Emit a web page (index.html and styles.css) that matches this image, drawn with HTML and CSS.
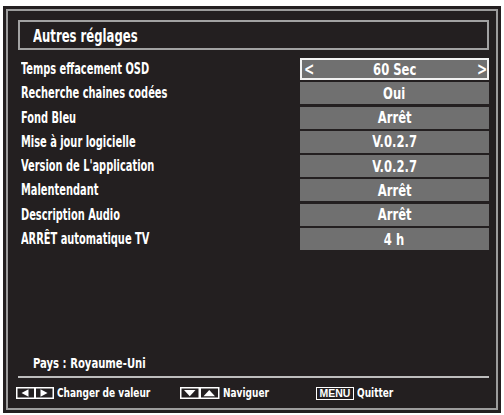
FILE: index.html
```html
<!DOCTYPE html>
<html lang="fr">
<head>
<meta charset="utf-8">
<title>Autres réglages</title>
<link rel="stylesheet" href="styles.css">
</head>
<body>
<div class="panel">
  <div class="frame">
    <div class="title-box"><span class="title">Autres réglages</span></div>
    <ul class="rows">
      <li class="row"><span class="label">Temps effacement OSD</span><span class="value selected"><span class="arrow">&lt;</span><span class="val">60 Sec</span><span class="arrow">&gt;</span></span></li>
      <li class="row"><span class="label">Recherche chaines codées</span><span class="value"><span class="val">Oui</span></span></li>
      <li class="row"><span class="label">Fond Bleu</span><span class="value"><span class="val">Arrêt</span></span></li>
      <li class="row"><span class="label">Mise à jour logicielle</span><span class="value"><span class="val">V.0.2.7</span></span></li>
      <li class="row"><span class="label">Version de L'application</span><span class="value"><span class="val">V.0.2.7</span></span></li>
      <li class="row"><span class="label">Malentendant</span><span class="value"><span class="val">Arrêt</span></span></li>
      <li class="row"><span class="label">Description Audio</span><span class="value"><span class="val">Arrêt</span></span></li>
      <li class="row"><span class="label">ARRÊT automatique TV</span><span class="value"><span class="val">4 h</span></span></li>
    </ul>
    <div class="spacer"></div>
    <div class="country"><span class="country-text">Pays : Royaume-Uni</span></div>
    <div class="separator"></div>
    <div class="footer">
      <div class="hint hint-lr">
        <svg class="key" width="38" height="12" viewBox="0 0 38 12">
          <rect x="0.75" y="0.75" width="18" height="10.5" fill="none" stroke="#fff" stroke-width="1.5"/>
          <rect x="19.25" y="0.75" width="18" height="10.5" fill="none" stroke="#fff" stroke-width="1.5"/>
          <polygon points="5.5,6 12.5,2.2 12.5,9.8" fill="#fff"/>
          <polygon points="31.5,6 24.5,2.2 24.5,9.8" fill="#fff"/>
        </svg>
        <span class="hint-text">Changer de valeur</span>
      </div>
      <div class="hint hint-ud">
        <svg class="key" width="40" height="12" viewBox="0 0 40 12">
          <rect x="0.75" y="0.75" width="18.5" height="10.5" fill="none" stroke="#fff" stroke-width="1.5"/>
          <rect x="20.25" y="0.75" width="18.5" height="10.5" fill="none" stroke="#fff" stroke-width="1.5"/>
          <polygon points="4,3 15.5,3 9.75,9.2" fill="#fff"/>
          <polygon points="23.5,9.2 35,9.2 29.25,3" fill="#fff"/>
        </svg>
        <span class="hint-text">Naviguer</span>
      </div>
      <div class="hint hint-menu">
        <span class="menu-key">MENU</span>
        <span class="hint-text">Quitter</span>
      </div>
    </div>
  </div>
</div>
</body>
</html>
```

FILE: styles.css
```css
html, body {
  margin: 0;
  padding: 0;
  background: #ffffff;
}

body {
  width: 504px;
  height: 415px;
  overflow: hidden;
  font-family: "DejaVu Sans Condensed", "Liberation Sans", sans-serif;
  color: #ffffff;
}

.panel {
  box-sizing: border-box;
  margin: 6px 0 0 3px;
  width: 498px;
  height: 407px;
  background: #231f20;
  padding: 3px;
}

.frame {
  box-sizing: border-box;
  height: 100%;
  border: 2px solid #9c9c9c;
  padding: 9px 7px 0 10px;
  display: flex;
  flex-direction: column;
}

.title-box {
  box-sizing: border-box;
  height: 30px;
  border: 2px solid #a2a2a2;
  display: flex;
  align-items: center;
  padding-left: 13px;
}

.title {
  display: inline-block;
  font-size: 18px;
  font-weight: bold;
  padding-top: 1px;
  transform: scaleX(0.72);
  transform-origin: left center;
  white-space: nowrap;
}

.rows {
  list-style: none;
  margin: 8px 0 0 0;
  padding: 0;
  display: flex;
  flex-direction: column;
  gap: 2.3px;
}

.row {
  height: 22px;
  display: flex;
  align-items: center;
  justify-content: space-between;
}

.label {
  display: inline-block;
  margin-left: 3px;
  font-size: 15px;
  font-weight: bold;
  transform: scaleX(0.73);
  transform-origin: left center;
  white-space: nowrap;
}

.value {
  box-sizing: border-box;
  width: 189px;
  height: 22px;
  background: #707070;
  display: flex;
  align-items: center;
  justify-content: center;
  flex-shrink: 0;
}

.val {
  display: inline-block;
  font-size: 16.5px;
  font-weight: bold;
  transform: scaleX(0.78);
  white-space: nowrap;
}

.value.selected {
  border: 2px solid #f2f2f2;
  justify-content: space-between;
  padding: 0 1px;
}

.arrow {
  display: inline-block;
  font-size: 17px;
  font-weight: bold;
  width: 10px;
  text-align: center;
  transform: scaleX(0.8);
}

.spacer {
  flex: 1;
}

.country {
  padding-left: 15px;
  line-height: 16px;
}

.country-text {
  display: inline-block;
  font-size: 14px;
  font-weight: bold;
  transform: scaleX(0.8);
  transform-origin: left center;
  white-space: nowrap;
}

.separator {
  margin-top: 5px;
  height: 2px;
  background: #bdbdbd;
}

.footer {
  display: flex;
  align-items: center;
  height: 30px;
  margin-left: -2px;
}

.hint {
  display: flex;
  align-items: center;
  gap: 3px;
}

.hint-text {
  display: inline-block;
  font-size: 11.5px;
  font-weight: bold;
  transform: scaleX(0.87);
  transform-origin: left center;
  white-space: nowrap;
}

.key {
  display: block;
}

.hint-lr {
  width: 164px;
}

.hint-ud {
  width: 136px;
}

.menu-key {
  box-sizing: border-box;
  border: 1.5px solid #ffffff;
  font-family: "Liberation Sans", sans-serif;
  font-size: 10.5px;
  font-weight: bold;
  line-height: 11px;
  width: 38px;
  text-align: center;
}
```
